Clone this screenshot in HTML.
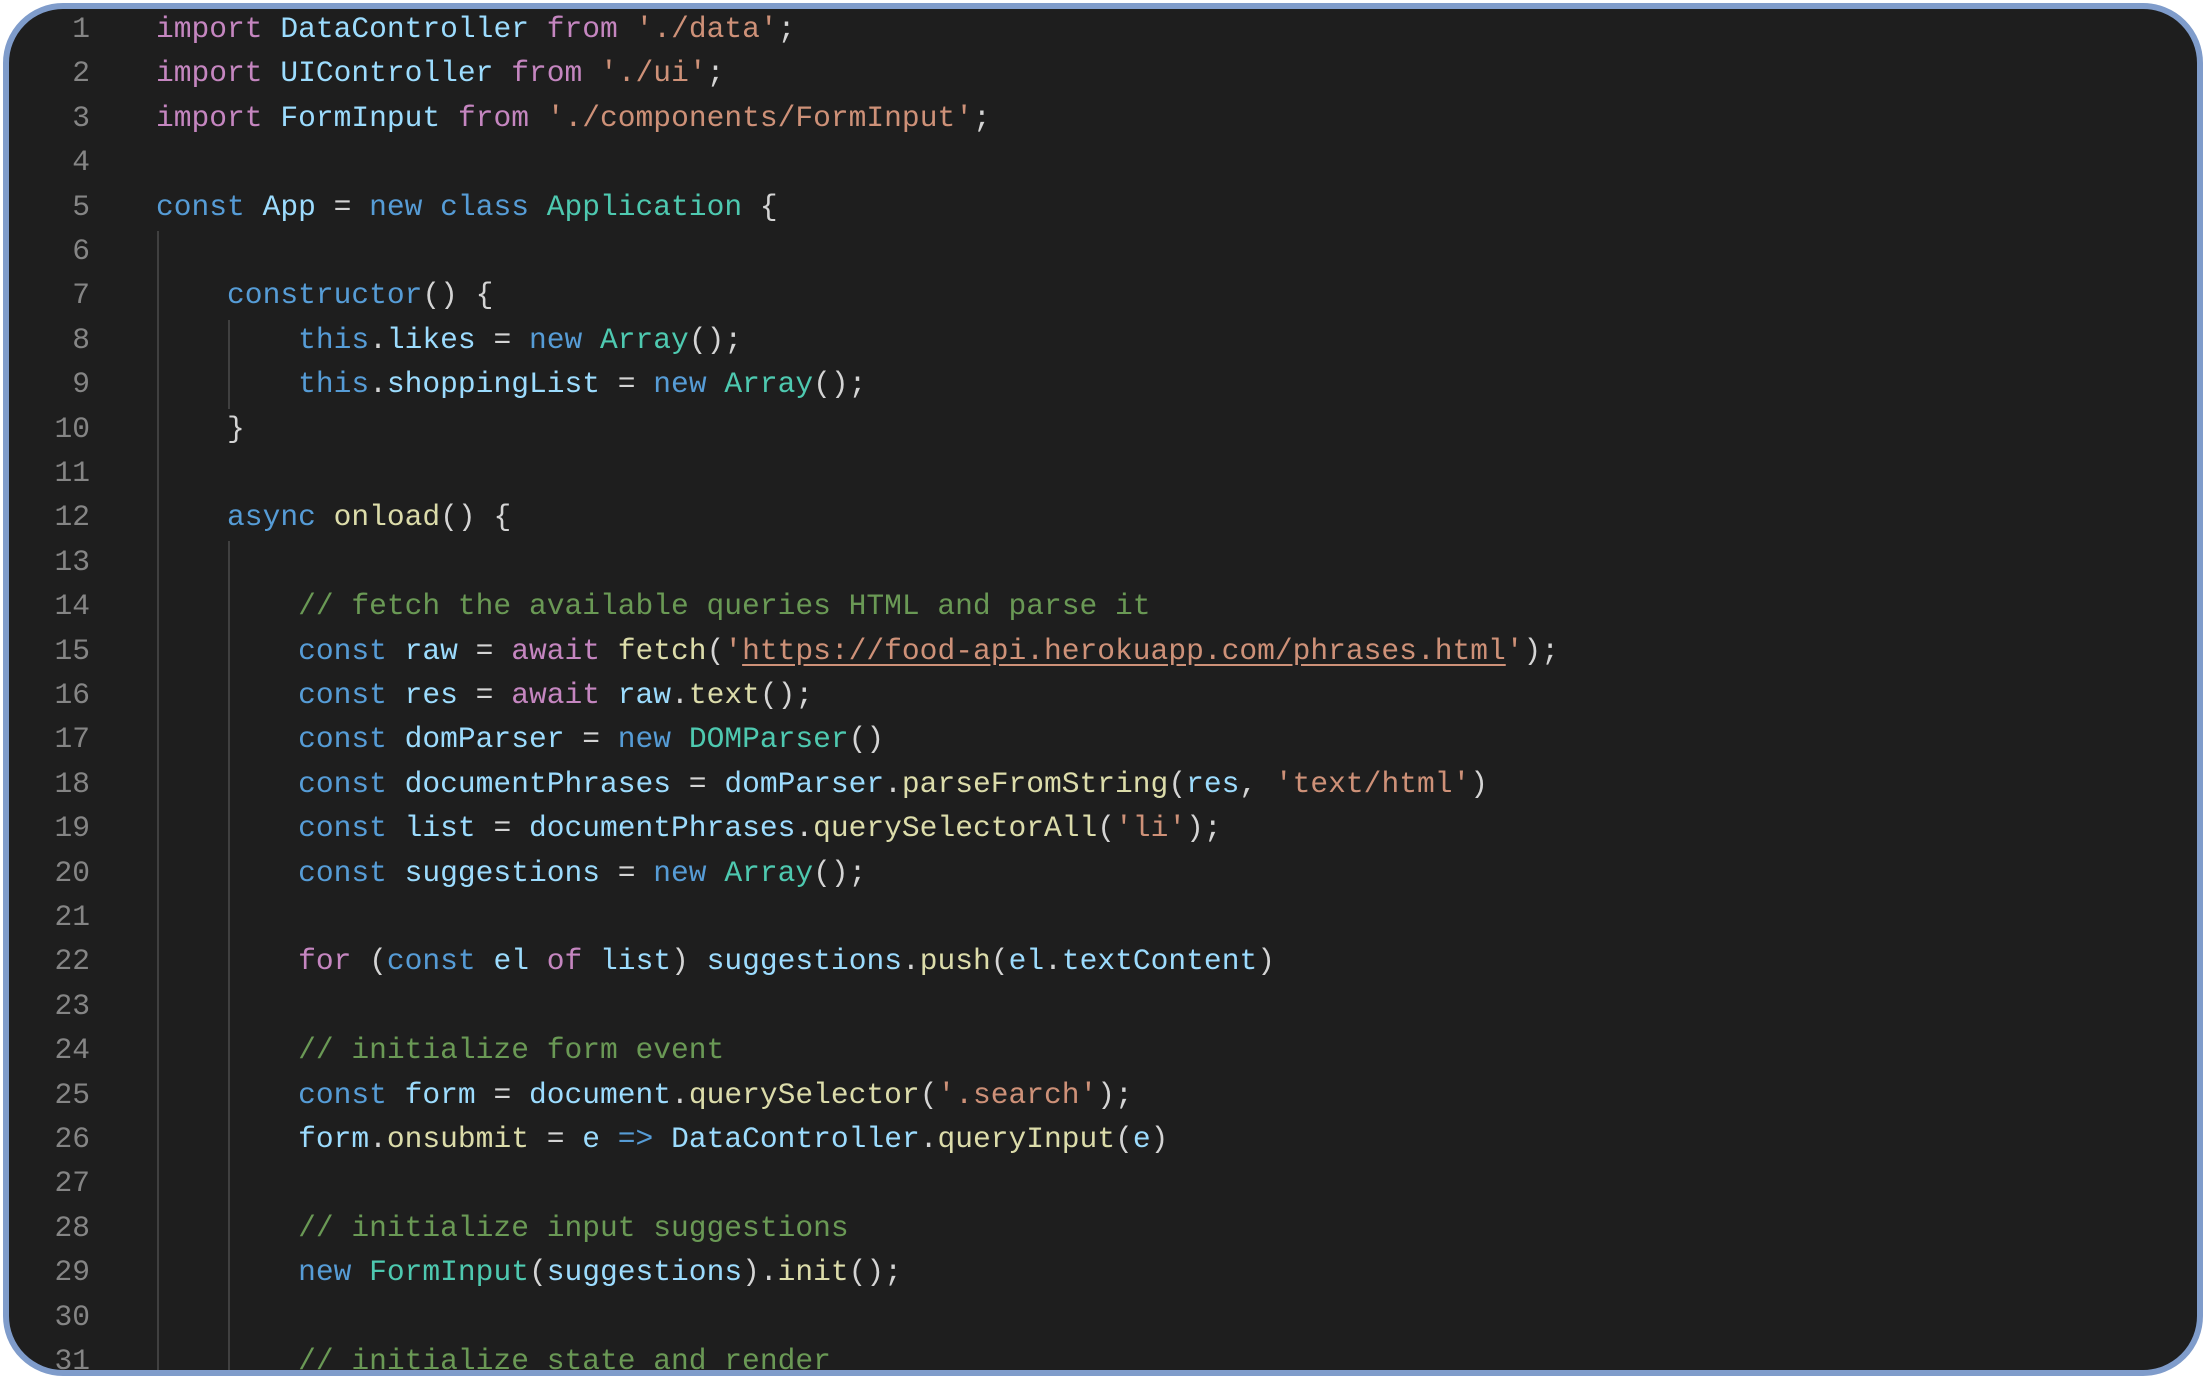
<!DOCTYPE html>
<html><head><meta charset="utf-8">
<style>
html,body{margin:0;padding:0;width:2203px;height:1376px;background:#fff;overflow:hidden}
.box{position:absolute;left:3px;top:3px;width:2188px;height:1361px;border:6px solid #7f9ccb;border-radius:60px;background:#1e1e1e;overflow:hidden}
.code{position:absolute;left:0;top:-2px;font-family:"Liberation Mono",monospace;font-size:29.6px;line-height:44.4px;white-space:pre;color:#d4d4d4}
.ln{position:absolute;left:0;width:81px;text-align:right;color:#858585}
.tx{position:absolute;left:147px}
.g{position:absolute;width:2px;background:#404040}
.k{color:#c586c0}.b{color:#569cd6}.v{color:#9cdcfe}.c{color:#4ec9b0}.f{color:#dcdcaa}.s{color:#ce9178}.m{color:#6a9955}
.u{text-decoration:underline;text-underline-offset:5px}
</style></head><body>
<div class="box">
<div class="g" style="left:148px;top:222px;height:1200px"></div>
<div class="g" style="left:219px;top:311px;height:89px"></div>
<div class="g" style="left:219px;top:532px;height:900px"></div>
<div class="code">
<div class="ln" style="top:0">1</div><div class="tx" style="top:0"><span class="k">import</span> <span class="v">DataController</span> <span class="k">from</span> <span class="s">'./data'</span>;</div>
<div class="ln" style="top:44.4px">2</div><div class="tx" style="top:44.4px"><span class="k">import</span> <span class="v">UIController</span> <span class="k">from</span> <span class="s">'./ui'</span>;</div>
<div class="ln" style="top:88.8px">3</div><div class="tx" style="top:88.8px"><span class="k">import</span> <span class="v">FormInput</span> <span class="k">from</span> <span class="s">'./components/FormInput'</span>;</div>
<div class="ln" style="top:133.2px">4</div>
<div class="ln" style="top:177.6px">5</div><div class="tx" style="top:177.6px"><span class="b">const</span> <span class="v">App</span> = <span class="b">new</span> <span class="b">class</span> <span class="c">Application</span> {</div>
<div class="ln" style="top:222px">6</div>
<div class="ln" style="top:266.4px">7</div><div class="tx" style="top:266.4px">    <span class="b">constructor</span>() {</div>
<div class="ln" style="top:310.8px">8</div><div class="tx" style="top:310.8px">        <span class="b">this</span>.<span class="v">likes</span> = <span class="b">new</span> <span class="c">Array</span>();</div>
<div class="ln" style="top:355.2px">9</div><div class="tx" style="top:355.2px">        <span class="b">this</span>.<span class="v">shoppingList</span> = <span class="b">new</span> <span class="c">Array</span>();</div>
<div class="ln" style="top:399.6px">10</div><div class="tx" style="top:399.6px">    }</div>
<div class="ln" style="top:444px">11</div>
<div class="ln" style="top:488.4px">12</div><div class="tx" style="top:488.4px">    <span class="b">async</span> <span class="f">onload</span>() {</div>
<div class="ln" style="top:532.8px">13</div>
<div class="ln" style="top:577.2px">14</div><div class="tx" style="top:577.2px">        <span class="m">// fetch the available queries HTML and parse it</span></div>
<div class="ln" style="top:621.6px">15</div><div class="tx" style="top:621.6px">        <span class="b">const</span> <span class="v">raw</span> = <span class="k">await</span> <span class="f">fetch</span>(<span class="s">'<span class="u">https://food-api.herokuapp.com/phrases.html</span>'</span>);</div>
<div class="ln" style="top:666px">16</div><div class="tx" style="top:666px">        <span class="b">const</span> <span class="v">res</span> = <span class="k">await</span> <span class="v">raw</span>.<span class="f">text</span>();</div>
<div class="ln" style="top:710.4px">17</div><div class="tx" style="top:710.4px">        <span class="b">const</span> <span class="v">domParser</span> = <span class="b">new</span> <span class="c">DOMParser</span>()</div>
<div class="ln" style="top:754.8px">18</div><div class="tx" style="top:754.8px">        <span class="b">const</span> <span class="v">documentPhrases</span> = <span class="v">domParser</span>.<span class="f">parseFromString</span>(<span class="v">res</span>, <span class="s">'text/html'</span>)</div>
<div class="ln" style="top:799.2px">19</div><div class="tx" style="top:799.2px">        <span class="b">const</span> <span class="v">list</span> = <span class="v">documentPhrases</span>.<span class="f">querySelectorAll</span>(<span class="s">'li'</span>);</div>
<div class="ln" style="top:843.6px">20</div><div class="tx" style="top:843.6px">        <span class="b">const</span> <span class="v">suggestions</span> = <span class="b">new</span> <span class="c">Array</span>();</div>
<div class="ln" style="top:888px">21</div>
<div class="ln" style="top:932.4px">22</div><div class="tx" style="top:932.4px">        <span class="k">for</span> (<span class="b">const</span> <span class="v">el</span> <span class="k">of</span> <span class="v">list</span>) <span class="v">suggestions</span>.<span class="f">push</span>(<span class="v">el</span>.<span class="v">textContent</span>)</div>
<div class="ln" style="top:976.8px">23</div>
<div class="ln" style="top:1021.2px">24</div><div class="tx" style="top:1021.2px">        <span class="m">// initialize form event</span></div>
<div class="ln" style="top:1065.6px">25</div><div class="tx" style="top:1065.6px">        <span class="b">const</span> <span class="v">form</span> = <span class="v">document</span>.<span class="f">querySelector</span>(<span class="s">'.search'</span>);</div>
<div class="ln" style="top:1110px">26</div><div class="tx" style="top:1110px">        <span class="v">form</span>.<span class="f">onsubmit</span> = <span class="v">e</span> <span class="b">=&gt;</span> <span class="v">DataController</span>.<span class="f">queryInput</span>(<span class="v">e</span>)</div>
<div class="ln" style="top:1154.4px">27</div>
<div class="ln" style="top:1198.8px">28</div><div class="tx" style="top:1198.8px">        <span class="m">// initialize input suggestions</span></div>
<div class="ln" style="top:1243.2px">29</div><div class="tx" style="top:1243.2px">        <span class="b">new</span> <span class="c">FormInput</span>(<span class="v">suggestions</span>).<span class="f">init</span>();</div>
<div class="ln" style="top:1287.6px">30</div>
<div class="ln" style="top:1332px">31</div><div class="tx" style="top:1332px">        <span class="m">// initialize state and render</span></div>
</div>
</div>
</body></html>
